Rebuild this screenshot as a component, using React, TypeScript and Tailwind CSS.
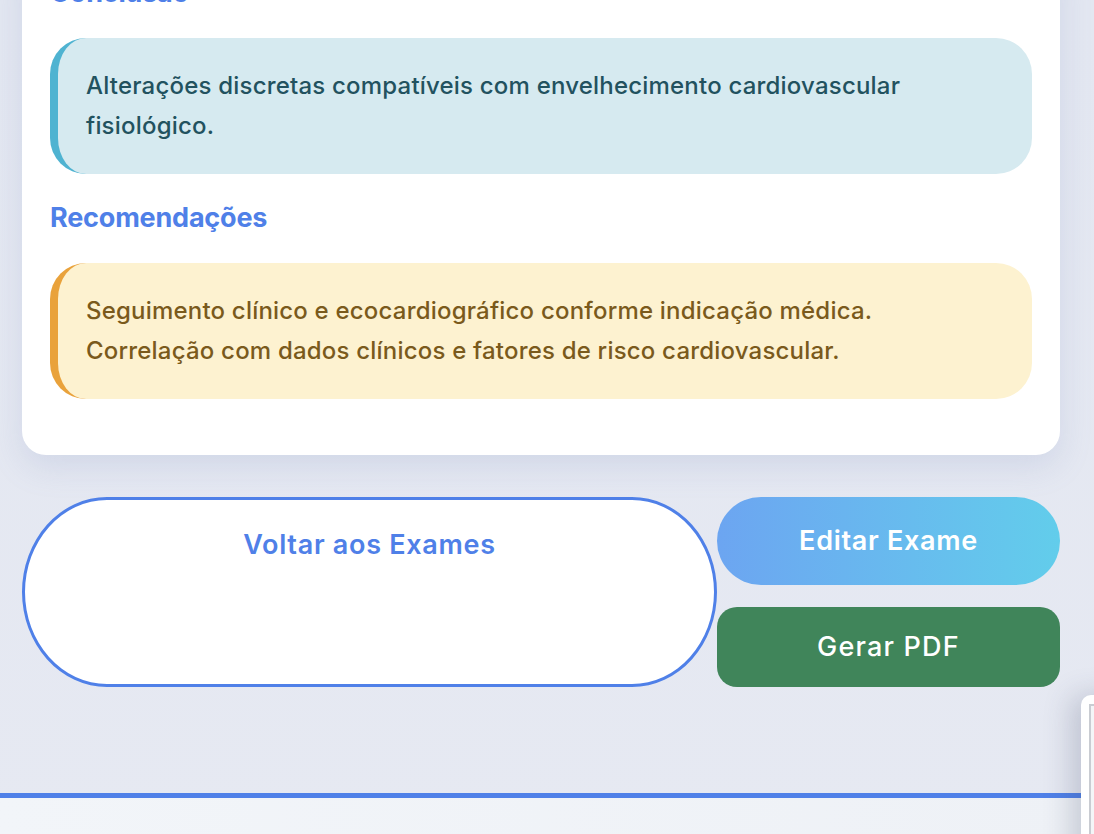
import React from "react";

const font = { fontFamily: "Inter, 'Noto Sans', sans-serif" };

function Section({
  title,
  lines,
  tone,
}: {
  title: string;
  lines: string[];
  tone: "info" | "warn";
}) {
  const box =
    tone === "info"
      ? "bg-[#d6eaf0] border-[#4fb3d1] text-[#22525f]"
      : "bg-[#fdf2d0] border-[#e9a23b] text-[#7a5a1c]";
  return (
    <section>
      <h3 className="text-[27px] leading-8 font-bold text-[#4f80e8] tracking-[-0.2px] mb-[29px]">
        {title}
      </h3>
      <div className={`rounded-[36px] border-l-[8px] px-7 py-7 ${box}`}>
        {lines.map((l, i) => (
          <p key={i} className="text-[24px] leading-10 font-medium tracking-[0.2px]">
            {l}
          </p>
        ))}
      </div>
    </section>
  );
}

export default function App() {
  return (
    <div
      style={font}
      className="relative h-[834px] overflow-hidden bg-gradient-to-b from-[#e3e7f1] to-[#e6e9f2]"
    >
      <main className="-mt-[51px] ml-[22px] w-[1038px]">
        {/* report card */}
        <div className="bg-white rounded-[24px] pt-7 px-7 pb-[56px] shadow-[0_12px_32px_rgba(120,140,190,0.18)] flex flex-col gap-7">
          <Section
            title="Conclusão"
            tone="info"
            lines={[
              "Alterações discretas compatíveis com envelhecimento cardiovascular",
              "fisiológico.",
            ]}
          />
          <Section
            title="Recomendações"
            tone="warn"
            lines={[
              "Seguimento clínico e ecocardiográfico conforme indicação médica.",
              "Correlação com dados clínicos e fatores de risco cardiovascular.",
            ]}
          />
        </div>

        {/* actions */}
        <div className="mt-[42px] flex">
          <button className="w-[695px] h-[190px] bg-white border-[3px] border-[#4f80e8] rounded-[85px/95px] flex justify-center pt-[29px] text-[27px] leading-8 font-semibold tracking-[0.7px] text-[#4f80e8]">
            Voltar aos Exames
          </button>
          <div className="flex-1 flex flex-col gap-[22px]">
            <button className="h-[88px] rounded-full bg-gradient-to-r from-[#6ca5f1] to-[#62cdeb] text-white text-[27px] font-semibold tracking-[0.7px]">
              Editar Exame
            </button>
            <button className="h-[80px] rounded-[20px] bg-[#40855a] text-white text-[27px] font-medium tracking-[1.2px]">
              Gerar PDF
            </button>
          </div>
        </div>
      </main>

      {/* footer */}
      <footer className="absolute left-0 right-0 top-[793px] bottom-0 border-t-[5px] border-[#4f80e8] bg-gradient-to-r from-[#f2f5f9] to-[#eef1f6]" />

      {/* floating widget edge */}
      <div className="absolute left-[1081px] top-[695px] w-[60px] h-[200px] bg-white rounded-tl-[10px] shadow-[-10px_0_28px_rgba(60,70,100,0.22)] pl-[8px] pt-[9px]">
        <div className="h-full border-l-2 border-t-2 border-[#c9ccd2] bg-[#f4f5f7]" />
      </div>
    </div>
  );
}
